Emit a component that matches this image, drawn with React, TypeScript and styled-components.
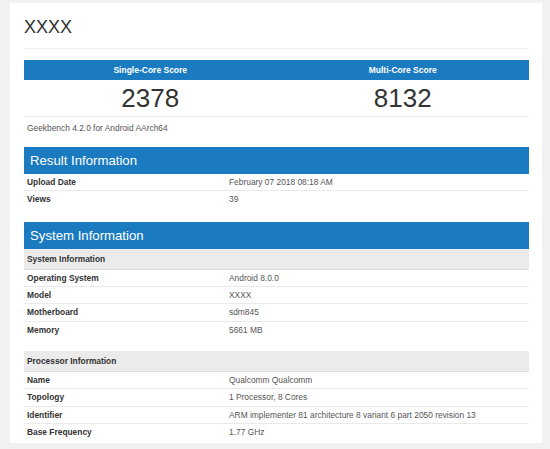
import React from "react";
import styled, { createGlobalStyle } from "styled-components";

const Global = createGlobalStyle`
  html, body { margin: 0; padding: 0; background: #f1f1f1; }
  body { font-family: "Liberation Sans", Arial, sans-serif; color: #333; }
`;

const BLUE = "#1b7bc0";

const Page = styled.div`
  width: 550px;
  height: 449px;
  padding: 3px 8px 6px 10px;
  box-sizing: border-box;
`;

const Card = styled.div`
  background: #fff;
  width: 532px;
  height: 440px;
  padding: 0 13px 0 14px;
  box-sizing: border-box;
  display: flex;
  flex-direction: column;
`;

const Title = styled.h1`
  margin: 0;
  height: 46px;
  border-bottom: 1px solid #f0f0f0;
  font-size: 18px;
  font-weight: 400;
  color: #333;
  display: flex;
  align-items: center;
  padding-top: 3px;
  box-sizing: border-box;
`;

const ScoreTable = styled.div`
  margin-top: 11px;
  display: grid;
  grid-template-columns: 1fr 1fr;
`;

const ScoreHead = styled.div`
  background: ${BLUE};
  color: #fff;
  height: 20px;
  font-size: 8.5px;
  font-weight: 700;
  display: flex;
  align-items: center;
  justify-content: center;
`;

const ScoreValue = styled.div`
  height: 36px;
  border-bottom: 1px solid #eee;
  font-size: 26px;
  color: #333;
  display: flex;
  align-items: center;
  justify-content: center;
`;

const Caption = styled.div`
  height: 21px;
  font-size: 8.4px;
  color: #555;
  display: flex;
  align-items: center;
  padding-left: 3px;
`;

const Section = styled.section<{ $gap: number }>`
  margin-top: ${(p) => p.$gap}px;
`;

const SectionHead = styled.div`
  background: ${BLUE};
  color: #fff;
  height: 27px;
  font-size: 13.2px;
  display: flex;
  align-items: center;
  padding-left: 6px;
`;

const SubHead = styled.div<{ $top?: number }>`
  background: #ebebeb;
  height: 20px;
  margin-top: ${(p) => p.$top ?? 0}px;
  border-bottom: 1px solid #ddd;
  font-size: 8.4px;
  font-weight: 700;
  color: #333;
  display: flex;
  align-items: center;
  padding-left: 3px;
`;

const Row = styled.div<{ $last?: boolean }>`
  display: grid;
  grid-template-columns: 202px 1fr;
  height: 16.33px;
  align-items: center;
  border-bottom: 1px solid ${(p) => (p.$last ? "transparent" : "#eaeaea")};
  padding-left: 3px;
  font-size: 8.4px;
`;

const Label = styled.span`
  font-weight: 700;
  color: #333;
`;

const Value = styled.span`
  color: #555;
`;

type Pair = [string, string];

const Rows = ({ items }: { items: Pair[] }) => (
  <>
    {items.map(([k, v], i) => (
      <Row key={k} $last={i === items.length - 1}>
        <Label>{k}</Label>
        <Value>{v}</Value>
      </Row>
    ))}
  </>
);

export default function App() {
  return (
    <>
      <Global />
      <Page>
        <Card>
          <Title>XXXX</Title>
          <ScoreTable>
            <ScoreHead>Single-Core Score</ScoreHead>
            <ScoreHead>Multi-Core Score</ScoreHead>
            <ScoreValue>2378</ScoreValue>
            <ScoreValue>8132</ScoreValue>
          </ScoreTable>
          <Caption>Geekbench 4.2.0 for Android AArch64</Caption>
          <Section $gap={9}>
            <SectionHead>Result Information</SectionHead>
            <Rows
              items={[
                ["Upload Date", "February 07 2018 08:18 AM"],
                ["Views", "39"],
              ]}
            />
          </Section>
          <Section $gap={13}>
            <SectionHead>System Information</SectionHead>
            <SubHead>System Information</SubHead>
            <Rows
              items={[
                ["Operating System", "Android 8.0.0"],
                ["Model", "XXXX"],
                ["Motherboard", "sdm845"],
                ["Memory", "5661 MB"],
              ]}
            />
            <SubHead $top={12}>Processor Information</SubHead>
            <Rows
              items={[
                ["Name", "Qualcomm Qualcomm"],
                ["Topology", "1 Processor, 8 Cores"],
                ["Identifier", "ARM implementer 81 architecture 8 variant 6 part 2050 revision 13"],
                ["Base Frequency", "1.77 GHz"],
              ]}
            />
          </Section>
        </Card>
      </Page>
    </>
  );
}
